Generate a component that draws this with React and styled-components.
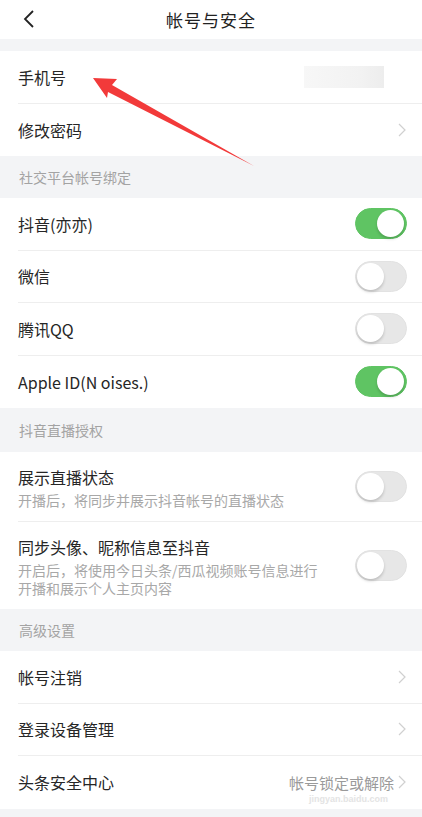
import React from 'react';
import styled, { createGlobalStyle, css } from 'styled-components';

const GlobalStyle = createGlobalStyle`
  body {
    margin: 0;
    background: #f3f4f6;
    font-family: "Noto Sans CJK SC", "Noto Sans", sans-serif;
  }
`;

const Page = styled.div`
  position: relative;
  width: 422px;
  min-height: 817px;
  background: #f3f4f6;
  overflow: hidden;
`;

const NavBar = styled.div`
  height: 39px;
  background: #fff;
  display: flex;
  align-items: center;
  justify-content: center;
  position: relative;
  margin-bottom: 12px;
`;

const BackButton = styled.div`
  position: absolute;
  left: 22px;
  top: 9px;
  width: 14px;
  height: 20px;
`;

const Title = styled.div`
  font-size: 17px;
  color: #222;
  letter-spacing: 1px;
`;

const Group = styled.div`
  background: #fff;
  padding-left: 18px;
`;

const SectionHeader = styled.div`
  height: ${({ h }) => h || 42}px;
  padding-left: 19px;
  display: flex;
  align-items: center;
  font-size: 14px;
  color: #a3a3a3;
`;

const Row = styled.div`
  min-height: ${({ h }) => h || 52.5}px;
  box-sizing: border-box;
  display: flex;
  align-items: center;
  padding-right: 16px;
  ${({ divider }) =>
    divider &&
    css`
      border-bottom: 1px solid #eeeeee;
    `};
`;

const Texts = styled.div`
  flex: 1;
  display: flex;
  flex-direction: column;
  gap: 2px;
`;

const Label = styled.div`
  font-size: 16px;
  color: #262626;
`;

const Sub = styled.div`
  font-size: 14px;
  line-height: 18px;
  color: #a8a8a8;
  max-width: 312px;
`;

const Value = styled.div`
  font-size: 15px;
  color: #9a9a9a;
  margin-right: 4px;
`;

const Track = styled.div`
  position: relative;
  width: 52px;
  height: 31px;
  border-radius: 16px;
  box-sizing: border-box;
  flex-shrink: 0;
  margin-right: -1px;
  background: ${({ on }) => (on ? '#5fc463' : '#e7e7e7')};
  border: 1px solid ${({ on }) => (on ? '#5fc463' : '#e2e2e2')};
`;

const Knob = styled.div`
  position: absolute;
  top: 1px;
  left: ${({ on }) => (on ? '21px' : '1px')};
  width: 27px;
  height: 27px;
  border-radius: 50%;
  background: #fff;
  box-shadow: 0 2px 3px rgba(0, 0, 0, 0.18);
`;

const Blur = styled.div`
  width: 80px;
  height: 22px;
  background: linear-gradient(90deg, #f7f7f7, #f2f2f2 70%, #ededed);
  margin-right: 22px;
`;

const Watermark = styled.div`
  position: absolute;
  right: 34px;
  bottom: 13px;
  font-size: 9px;
  color: #e4e4e4;
  font-family: "Liberation Sans", sans-serif;
  font-weight: bold;
`;

const ArrowLayer = styled.svg`
  position: absolute;
  left: 0;
  top: 0;
  pointer-events: none;
`;

const Chevron = () => (
  <svg width="8" height="14" viewBox="0 0 8 14">
    <path d="M1 1l6 6-6 6" fill="none" stroke="#d0d0d0" strokeWidth="1.2" />
  </svg>
);

const Toggle = ({ on }) => (
  <Track on={on ? 1 : 0}>
    <Knob on={on ? 1 : 0} />
  </Track>
);

const App = () => (
  <Page>
    <GlobalStyle />
    <NavBar>
      <BackButton>
        <svg width="14" height="20" viewBox="0 0 14 20">
          <path d="M11 2L3 10l8 8" fill="none" stroke="#222" strokeWidth="1.8" />
        </svg>
      </BackButton>
      <Title>帐号与安全</Title>
    </NavBar>

    <Group>
      <Row divider>
        <Texts>
          <Label>手机号</Label>
        </Texts>
        <Blur />
      </Row>
      <Row>
        <Texts>
          <Label>修改密码</Label>
        </Texts>
        <Chevron />
      </Row>
    </Group>

    <SectionHeader>社交平台帐号绑定</SectionHeader>
    <Group>
      <Row divider>
        <Texts>
          <Label>抖音(亦亦)</Label>
        </Texts>
        <Toggle on />
      </Row>
      <Row divider>
        <Texts>
          <Label>微信</Label>
        </Texts>
        <Toggle />
      </Row>
      <Row divider>
        <Texts>
          <Label>腾讯QQ</Label>
        </Texts>
        <Toggle />
      </Row>
      <Row>
        <Texts>
          <Label>Apple ID(N oises.)</Label>
        </Texts>
        <Toggle on />
      </Row>
    </Group>

    <SectionHeader h={44}>抖音直播授权</SectionHeader>
    <Group>
      <Row divider h={70}>
        <Texts>
          <Label>展示直播状态</Label>
          <Sub>开播后，将同步并展示抖音帐号的直播状态</Sub>
        </Texts>
        <Toggle />
      </Row>
      <Row h={87}>
        <Texts>
          <Label>同步头像、昵称信息至抖音</Label>
          <Sub>开启后，将使用今日头条/西瓜视频账号信息进行开播和展示个人主页内容</Sub>
        </Texts>
        <Toggle />
      </Row>
    </Group>

    <SectionHeader>高级设置</SectionHeader>
    <Group>
      <Row divider>
        <Texts>
          <Label>帐号注销</Label>
        </Texts>
        <Chevron />
      </Row>
      <Row divider>
        <Texts>
          <Label>登录设备管理</Label>
        </Texts>
        <Chevron />
      </Row>
      <Row>
        <Texts>
          <Label>头条安全中心</Label>
        </Texts>
        <Value>帐号锁定或解除</Value>
        <Chevron />
      </Row>
    </Group>

    <Watermark>jingyan.baidu.com</Watermark>

    <ArrowLayer width="422" height="817" viewBox="0 0 422 817">
      <polygon
        points="93,78 117,79 112,85 254,166 108,92 107,98"
        fill="#f23a3a"
      />
    </ArrowLayer>
  </Page>
);

export default App;
